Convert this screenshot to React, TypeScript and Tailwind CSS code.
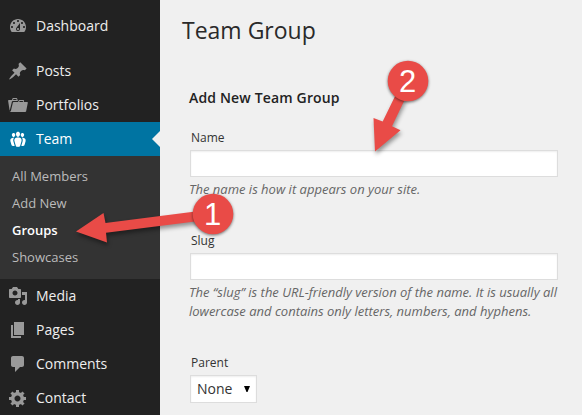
import type { ReactNode } from 'react';

const icons = {
  dashboard: 'M3.76 16h12.48c1.1-1.37 1.76-3.11 1.76-5 0-4.42-3.58-8-8-8s-8 3.58-8 8c0 1.89.66 3.63 1.76 5zM10 4c.55 0 1 .45 1 1s-.45 1-1 1-1-.45-1-1 .45-1 1-1zM6 6c.55 0 1 .45 1 1s-.45 1-1 1-1-.45-1-1 .45-1 1-1zm8 0c.55 0 1 .45 1 1s-.45 1-1 1-1-.45-1-1 .45-1 1-1zm-5.37 5.55L12 7v6c0 1.1-.9 2-2 2s-2-.9-2-2c0-.57.24-1.08.63-1.45zM4 10c.55 0 1 .45 1 1s-.45 1-1 1-1-.45-1-1 .45-1 1-1zm12 0c.55 0 1 .45 1 1s-.45 1-1 1-1-.45-1-1 .45-1 1-1zm-5 3c0-.55-.45-1-1-1s-1 .45-1 1 .45 1 1 1 1-.45 1-1z',
  posts: 'M10.44 3.02l1.82-1.82 6.36 6.35-1.83 1.82c-1.05-.68-2.48-.57-3.41.36l-.75.75c-.92.93-1.04 2.35-.35 3.41l-1.83 1.82-2.41-2.41-2.8 2.79c-.42.42-3.38 2.71-3.8 2.29s1.86-3.39 2.28-3.81l2.79-2.79L4.1 9.36l1.83-1.82c1.05.69 2.48.57 3.4-.36l.75-.75c.93-.92 1.05-2.35.36-3.41z',
  portfolios: 'M4 5H.78c-.37 0-.74.32-.69.84l1.56 9.99S3.5 8.47 3.86 6.7c.11-.53.61-.7.98-.7H10s-.7-2.08-.77-2.31C9.11 3.25 8.89 3 8.45 3H5.14c-.36 0-.7.23-.8.64C4.25 4.04 4 5 4 5zm4.88 0h-4s.42-1 .87-1h2.13c.48 0 1 1 1 1zM2.67 16.25c-.31.47-.76.75-1.26.75h15.73c.54 0 .92-.31 1.03-.83.44-2.19 1.68-8.44 1.68-8.44.07-.5-.3-.73-.62-.73H16V5.53c0-.16-.26-.53-.66-.53h-3.76c-.52 0-.87.58-.87.58L10 7H5.59c-.32 0-.63.19-.69.5 0 0-1.59 6.7-1.72 7.33-.07.37-.22.99-.51 1.42zM15.38 7H11s.58-1 1.13-1h2.29c.71 0 .96 1 .96 1z',
  team: 'M8.03 4.46c-.29 1.28.55 3.46 1.97 3.46 1.41 0 2.25-2.18 1.96-3.46-.22-.98-1.08-1.63-1.96-1.63-.89 0-1.74.65-1.97 1.63zM3.9 5.36c-.25 1.08.47 2.93 1.67 2.93s1.92-1.85 1.67-2.93c-.19-.83-.92-1.39-1.67-1.39s-1.48.56-1.67 1.39zm8.86 0c-.25 1.08.47 2.93 1.66 2.93 1.2 0 1.92-1.85 1.67-2.93-.19-.83-.92-1.39-1.67-1.39-.74 0-1.47.56-1.66 1.39zm-.59 11.43l1.25-4.3C14.2 10 12.71 8.47 10 8.47c-2.72 0-4.21 1.53-3.44 4.02l1.26 4.3C8.05 17.51 9 18 10 18c.98 0 1.94-.49 2.17-1.21zM6.1 8.8C3.4 8.6 1.8 9.9 2.4 12.2l1.1 3.7c.3.9 1.9 1.4 3.2.9l-1.2-4.1c-.5-1.7-.2-3 .6-3.9zm7.8 0c.8.9 1.1 2.2.6 3.9l-1.2 4.1c1.3.5 2.9 0 3.2-.9l1.1-3.7c.6-2.3-1-3.6-3.7-3.4z',
  media: 'M13 11V4c0-.55-.45-1-1-1h-1.67L9 1H5L3.67 3H2c-.55 0-1 .45-1 1v7c0 .55.45 1 1 1h10c.55 0 1-.45 1-1zM7 4.5c1.38 0 2.5 1.12 2.5 2.5S8.38 9.5 7 9.5 4.5 8.38 4.5 7 5.62 4.5 7 4.5zM14 6h5v10.5c0 1.38-1.12 2.5-2.5 2.5S14 17.88 14 16.5s1.12-2.5 2.5-2.5c.17 0 .34.02.5.05V9h-3V6zm-4 8.05V13h2v3.5c0 1.38-1.12 2.5-2.5 2.5S7 17.88 7 16.5 8.12 14 9.5 14c.17 0 .34.02.5.05z',
  pages: 'M6 15V2h10v13H6zm-1 1h8v2H3V5h2v11z',
  comments: 'M5 2h9c1.1 0 2 .9 2 2v7c0 1.1-.9 2-2 2h-2l-5 5v-5H5c-1.1 0-2-.9-2-2V4c0-1.1.9-2 2-2z',
  contact: 'M18 12h-2.18c-.17.7-.44 1.35-.81 1.93l1.54 1.54-2.1 2.1-1.54-1.54c-.58.36-1.23.63-1.91.79V19H8v-2.18c-.68-.16-1.33-.43-1.91-.79l-1.54 1.54-2.12-2.12 1.54-1.54c-.36-.58-.63-1.23-.79-1.91H1V9.03h2.17c.16-.7.44-1.35.8-1.94L2.43 5.55l2.1-2.1 1.54 1.54c.58-.37 1.24-.64 1.93-.81V2h3v2.18c.68.16 1.33.43 1.91.79l1.54-1.54 2.12 2.12-1.54 1.54c.36.59.64 1.24.8 1.94H18V12zm-8.5 1.5c1.66 0 3-1.34 3-3s-1.34-3-3-3-3 1.34-3 3 1.34 3 3 3z',
};

function MenuItem({ icon, label, active = false }: { icon: keyof typeof icons; label: string; active?: boolean }) {
  return (
    <a className={`flex h-[34px] items-center gap-2 pl-2 text-sm ${active ? 'relative bg-[#0074a2] text-white' : 'text-[#eee]'}`}>
      <svg viewBox="0 0 20 20" className={`size-5 shrink-0 ${active ? 'fill-white' : 'fill-[#999]'}`}>
        <path d={icons[icon]} />
      </svg>
      {label}
      {active && <span className="absolute top-[9px] right-0 border-y-8 border-r-8 border-y-transparent border-r-[#f0f0f0]" />}
    </a>
  );
}

function Field({ label, children }: { label: string; children: ReactNode }) {
  return (
    <label className="block">
      <span className="block pl-px text-xs leading-[18px] text-[#333]">{label}</span>
      {children}
    </label>
  );
}

const inputClass = 'mt-[3px] block h-[27px] w-[368px] border border-[#ddd] bg-white shadow-[inset_0_1px_2px_rgba(0,0,0,0.07)] outline-none';
const hintClass = 'mt-[3px] -ml-px text-[13px] leading-[19px] text-[#666] italic';

export default function App() {
  return (
    <div className="relative flex h-[415px] w-[582px] overflow-hidden bg-[#f0f0f0] font-['Open_Sans','Noto_Sans',sans-serif]">
      <nav className="w-40 shrink-0 bg-[#222] pt-[9px]">
        <MenuItem icon="dashboard" label="Dashboard" />
        <div className="h-[11px]" />
        <MenuItem icon="posts" label="Posts" />
        <MenuItem icon="portfolios" label="Portfolios" />
        <MenuItem icon="team" label="Team" active />
        <div className="flex h-[123px] flex-col bg-[#333] pt-[7px] pl-3 text-[13px] leading-[27px] text-[#bbb]">
          <a>All Members</a>
          <a>Add New</a>
          <a className="font-semibold text-white">Groups</a>
          <a>Showcases</a>
        </div>
        <MenuItem icon="media" label="Media" />
        <MenuItem icon="pages" label="Pages" />
        <MenuItem icon="comments" label="Comments" />
        <MenuItem icon="contact" label="Contact" />
      </nav>

      <main className="flex-1 pt-[15px] pl-[22px]">
        <h1 className="text-[23px] leading-[30px] font-normal text-[#2a2a2a]">Team Group</h1>
        <form className="pt-[43px] pl-2">
          <h3 className="-ml-px text-sm leading-5 font-semibold tracking-[0.16px] text-[#222]">Add New Team Group</h3>
          <div className="pt-[21px]">
            <Field label="Name">
              <input className={inputClass} />
            </Field>
            <p className={hintClass}>The name is how it appears on your site.</p>
          </div>
          <div className="pt-[33px]">
            <Field label="Slug">
              <input className={inputClass} />
            </Field>
            <p className={hintClass}>
              The “slug” is the URL-friendly version of the name. It is usually all
              <br />
              lowercase and contains only letters, numbers, and hyphens.
            </p>
          </div>
          <div className="pt-[33px]">
            <Field label="Parent">
              <span className="mt-[3px] flex h-7 w-[67px] items-center justify-between border border-[#ddd] bg-white pr-1.5 pl-1.5 text-sm text-[#333] shadow-[inset_0_1px_2px_rgba(0,0,0,0.07)]">
                None
                <svg viewBox="0 0 6 6" className="size-1.5 fill-black">
                  <path d="M0 0h6L3.5 6h-1z" />
                </svg>
              </span>
            </Field>
          </div>
        </form>
      </main>

      <svg viewBox="0 0 582 415" className="pointer-events-none absolute inset-0 h-[415px] w-[582px] fill-[#e94b47]">
        <g className="drop-shadow-[1px_3px_2px_rgba(0,0,0,0.4)]">
          <path d="M76 231.500L103.500 213 105.500 223 213 209.200V219.300L106 232.800 107 242.500z" />
          <path d="M375 151.500L373.500 118 382.700 121.500 400 86 407 95 392 126.300 400.500 130.300z" />
        </g>
        <circle cx="213" cy="214" r="20.300" className="drop-shadow-[0_1px_1.500px_rgba(0,0,0,0.55)]" />
        <circle cx="408" cy="81" r="20.300" className="drop-shadow-[0_1px_1.500px_rgba(0,0,0,0.55)]" />
        <g className="fill-white font-['Liberation_Sans',sans-serif] text-[31px]" textAnchor="middle">
          <text x="212.500" y="224.500">1</text>
          <text x="407.500" y="91.500">2</text>
        </g>
      </svg>
    </div>
  );
}
